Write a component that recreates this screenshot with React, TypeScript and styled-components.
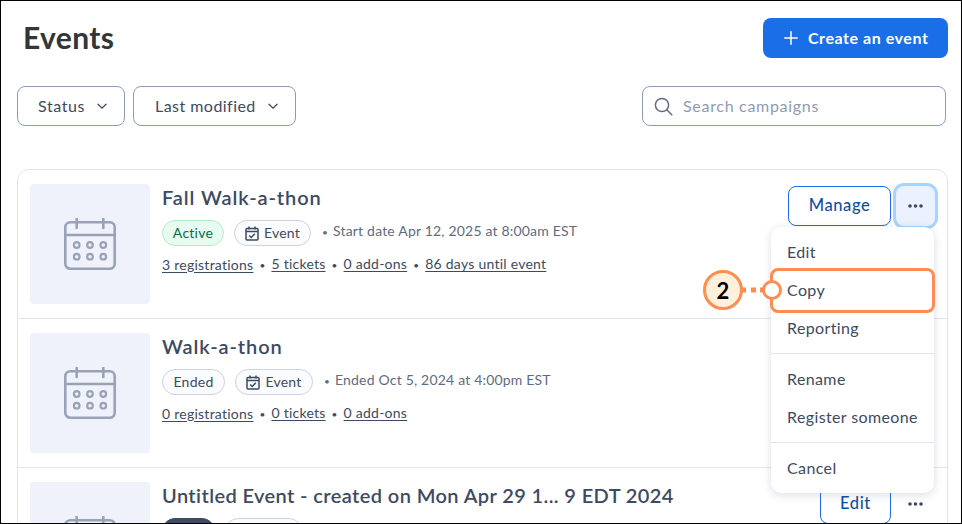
import React from "react";
import styled, { createGlobalStyle } from "styled-components";

const Global = createGlobalStyle`
  html, body { margin: 0; padding: 0; background: #fff; }
  body { font-family: "Lato", "Liberation Sans", sans-serif; color: #3d4a63; }
  * { box-sizing: border-box; }
`;
const Frame = styled.div`
  position: relative; width: 962px; height: 524px; border: 1px solid #000; overflow: hidden; background: #fff;
`;
const Header = styled.header`
  display: flex; justify-content: space-between; align-items: center; padding: 17px 13px 0 22px;
`;
const Title = styled.h1`
  margin: 0; padding-bottom: 2px; font-size: 30px; line-height: 38px; font-weight: 700; color: #333639; letter-spacing: 0.35px;
`;
const CreateButton = styled.button`
  display: flex; align-items: center; gap: 10px; width: 185px; height: 40px; padding: 0 0 2px 21px;
  border: 0; border-radius: 8px; background: #1a6fe8; color: #fff; font: 700 16px "Lato", sans-serif; letter-spacing: 0.55px;
  svg { margin-top: 2px; }
`;
const Filters = styled.div`
  display: flex; gap: 8px; align-items: center; margin-top: 28px; padding: 0 15px 0 16px;
`;
const FilterButton = styled.button<{ $w: number; $indent: number; $track: number }>`
  display: flex; align-items: center; justify-content: space-between; width: ${p => p.$w}px; height: 40px;
  padding: 0 17px 2px ${p => p.$indent}px; background: #fff; border: 1px solid #8e9bb8; border-radius: 8px;
  color: #3d4a63; font: 400 16px "Lato", sans-serif; letter-spacing: ${p => p.$track}px;
  svg { margin-top: 2px; }
`;
const Search = styled.div`
  display: flex; align-items: center; gap: 10px; width: 304px; height: 40px; margin-left: auto; padding: 0 0 2px 11px;
  border: 1px solid #8e9bb8; border-radius: 8px; color: #8e9bb8; font-size: 16px; letter-spacing: 0.7px;
  svg { margin-top: 2px; }
`;
const Card = styled.section`
  margin: 43px 13px 0 16px; border: 1px solid #e1e5ee; border-radius: 12px;
`;
const Row = styled.article`
  display: flex; gap: 12px; padding: 14px 12px 14px 12px; height: 149px; border-bottom: 1px solid #e1e5ee;
`;
const Thumb = styled.div`
  display: flex; align-items: center; justify-content: center; flex: none; width: 120px; height: 120px;
  background: #eff2fa; border-radius: 4px;
`;
const Body = styled.div`
  flex: 1; min-width: 0;
`;
const EventTitle = styled.h2<{ $track: number }>`
  margin: -1px 0 0; font-size: 20px; line-height: 28px; font-weight: 600; color: #3d4a63;
  letter-spacing: ${p => p.$track}px; white-space: nowrap;
`;
const Meta = styled.div`
  display: flex; align-items: center; gap: 10px; margin-top: 9px; height: 26px; font-size: 14px;
`;
const Pill = styled.span<{ $kind?: "active" | "dark"; $w: number }>`
  display: inline-flex; align-items: center; justify-content: center; gap: 5px; flex: none; width: ${p => p.$w}px; height: 26px;
  padding: 0 0 2px; border-radius: 13px; letter-spacing: 0.25px;
  border: 1px solid ${p => p.$kind === "active" ? "#b3eecb" : p.$kind === "dark" ? "#3d4a63" : "#ccd2e2"};
  background: ${p => p.$kind === "active" ? "#e7fbf0" : p.$kind === "dark" ? "#3d4a63" : "#fafbfd"};
  color: ${p => p.$kind === "active" ? "#0a6b4a" : "#3d4a63"};
  svg { margin-top: 2px; }
`;
const When = styled.span`
  color: #5f6b82; letter-spacing: 0.19px; margin-top: -5px;
  &::before { content: "•"; font-size: 10px; margin-right: 5px; margin-left: 1px; }
`;
const Links = styled.div`
  display: flex; align-items: center; margin-top: 8px; font-size: 14px; line-height: 20px; letter-spacing: 0.25px;
`;
const StatLink = styled.a`
  color: #3d4a63; text-decoration: underline; text-underline-offset: 2px;
  & + &::before { content: "•"; display: inline-block; width: 18px; text-align: center; font-size: 10px; }
`;
const Actions = styled.div`
  position: relative; display: flex; align-items: flex-start; gap: 5px; flex: none; margin-top: 2px;
`;
const OutlineButton = styled.button<{ $w: number }>`
  width: ${p => p.$w}px; height: 40px; padding: 0 0 2px; background: #fff; border: 1px solid #1a6fe8; border-radius: 8px;
  color: #0f4fa8; font: 500 16.5px "Lato", sans-serif; letter-spacing: 0.6px;
`;
const Kebab = styled.button<{ $open?: boolean }>`
  display: flex; align-items: center; justify-content: center; width: 39px; height: 40px; padding: 0; border: 0; border-radius: 8px;
  background: ${p => p.$open ? "#ebf1fd" : "#fff"};
  box-shadow: ${p => p.$open ? "0 0 0 3px #a6d3ff" : "none"};
  color: #3d4a63;
`;
const Menu = styled.div`
  position: absolute; top: 41px; right: 1px; width: 163px; padding: 6px 0; background: #fff; border-radius: 10px;
  box-shadow: 0 2px 10px rgba(61, 74, 99, 0.18); z-index: 2;
`;
const MenuItem = styled.div`
  display: flex; align-items: center; height: 38px; padding: 0 0 2px 16px; font-size: 16px; letter-spacing: 0.38px; color: #3d4a63;
`;
const MenuDivider = styled.div`
  height: 1px; margin: 6px 0; background: #e1e5ee;
`;
const Highlight = styled.div`
  position: absolute; left: 769px; top: 267px; width: 165px; height: 45px; border: 3px solid #ff8c50; border-radius: 8px; z-index: 3;
`;
const Callout = styled.div`
  position: absolute; left: 702px; top: 269px; display: flex; align-items: center; justify-content: center;
  width: 40px; height: 40px; border: 3px solid #ff8c50; border-radius: 50%; background: #fff0dc;
  color: #000; font-size: 22px; font-weight: 700; z-index: 3;
`;
const Connector = styled.svg`
  position: absolute; left: 741px; top: 286px; z-index: 3;
`;
const Anchor = styled.div`
  position: absolute; left: 761px; top: 279px; width: 20px; height: 20px; border: 3px solid #ff8c50; border-radius: 50%;
  background: #fff; z-index: 4;
`;

const CalendarIcon = () => (
  <svg width="52" height="52" viewBox="0 0 52 52" fill="none" stroke="#9aa2b5" strokeWidth="2.6" strokeLinecap="round">
    <rect x="1.3" y="4.3" width="49.4" height="46.4" rx="5" />
    <path d="M1.3 17H50.7M12.7 0.8V10M39.3 0.8V10" />
    {[12.7, 26, 39.3].map(x => [27, 38.7].map(y => <circle key={`${x}-${y}`} cx={x} cy={y} r="2.8" strokeWidth="2.2" />))}
  </svg>
);
const EventIcon = () => (
  <svg width="14" height="15" viewBox="0 0 14 15" fill="none" stroke="#3d4a63" strokeWidth="1.5">
    <rect x="1" y="2.5" width="12" height="11.5" rx="1" />
    <path d="M1 5.5H13M4 0.5V3.5M10 0.5V3.5" />
    <path d="M4.2 9.5L6.2 11.5L9.8 7.8" />
  </svg>
);
const Chevron = () => (
  <svg width="10" height="7" viewBox="0 0 10 7" fill="none" stroke="#3d4a63" strokeWidth="1.3" strokeLinecap="round">
    <path d="M1 1.2L5 5.2L9 1.2" />
  </svg>
);
const Plus = () => (
  <svg width="14" height="14" viewBox="0 0 14 14" stroke="#fff" strokeWidth="1.5" strokeLinecap="round"><path d="M7 0.8V13.2M0.8 7H13.2" /></svg>
);
const SearchIcon = () => (
  <svg width="19" height="19" viewBox="0 0 19 19" fill="none" stroke="#5f6b82" strokeWidth="1.5" strokeLinecap="round">
    <circle cx="8" cy="8" r="6.6" /><path d="M13 13L17.8 17.8" />
  </svg>
);
const Dots = () => (
  <svg width="15" height="4" viewBox="0 0 15 4" fill="#3d4a63"><circle cx="2" cy="2" r="1.8" /><circle cx="7.5" cy="2" r="1.8" /><circle cx="13" cy="2" r="1.8" /></svg>
);

export default function App() {
  return (
    <Frame>
      <Global />
      <Header>
        <Title>Events</Title>
        <CreateButton><Plus />Create an event</CreateButton>
      </Header>
      <Filters>
        <FilterButton $w={108} $indent={20} $track={0.6}>Status <Chevron /></FilterButton>
        <FilterButton $w={163} $indent={21} $track={0.46}>Last modified <Chevron /></FilterButton>
        <Search><SearchIcon />Search campaigns</Search>
      </Filters>
      <Card>
        <Row>
          <Thumb><CalendarIcon /></Thumb>
          <Body>
            <EventTitle $track={0.9}>Fall Walk-a-thon</EventTitle>
            <Meta>
              <Pill $kind="active" $w={62}>Active</Pill>
              <Pill $w={77}><EventIcon />Event</Pill>
              <When>Start date Apr 12, 2025 at 8:00am EST</When>
            </Meta>
            <Links>
              <StatLink>3 registrations</StatLink>
              <StatLink>5 tickets</StatLink>
              <StatLink>0 add-ons</StatLink>
              <StatLink>86 days until event</StatLink>
            </Links>
          </Body>
          <Actions>
            <OutlineButton $w={103}>Manage</OutlineButton>
            <Kebab $open><Dots /></Kebab>
            <Menu>
              <MenuItem>Edit</MenuItem>
              <MenuItem>Copy</MenuItem>
              <MenuItem>Reporting</MenuItem>
              <MenuDivider />
              <MenuItem>Rename</MenuItem>
              <MenuItem>Register someone</MenuItem>
              <MenuDivider />
              <MenuItem>Cancel</MenuItem>
            </Menu>
          </Actions>
        </Row>
        <Row>
          <Thumb><CalendarIcon /></Thumb>
          <Body>
            <EventTitle $track={0.9}>Walk-a-thon</EventTitle>
            <Meta>
              <Pill $w={63}>Ended</Pill>
              <Pill $w={78}><EventIcon />Event</Pill>
              <When>Ended Oct 5, 2024 at 4:00pm EST</When>
            </Meta>
            <Links>
              <StatLink>0 registrations</StatLink>
              <StatLink>0 tickets</StatLink>
              <StatLink>0 add-ons</StatLink>
            </Links>
          </Body>
        </Row>
        <Row>
          <Thumb><CalendarIcon /></Thumb>
          <Body>
            <EventTitle $track={0.4}>Untitled Event - created on Mon Apr 29 1... 9 EDT 2024</EventTitle>
            <Meta>
              <Pill $kind="dark" $w={53} />
              <Pill $w={77} />
            </Meta>
          </Body>
          <Actions>
            <OutlineButton $w={71}>Edit</OutlineButton>
            <Kebab><Dots /></Kebab>
          </Actions>
        </Row>
      </Card>
      <Highlight />
      <Connector width="22" height="6" viewBox="0 0 22 6" fill="#ff8c50">
        <rect x="0" y="0.5" width="4" height="5" /><rect x="9" y="0.5" width="5" height="5" /><rect x="18" y="0.5" width="4" height="5" />
      </Connector>
      <Callout>2</Callout>
      <Anchor />
    </Frame>
  );
}
